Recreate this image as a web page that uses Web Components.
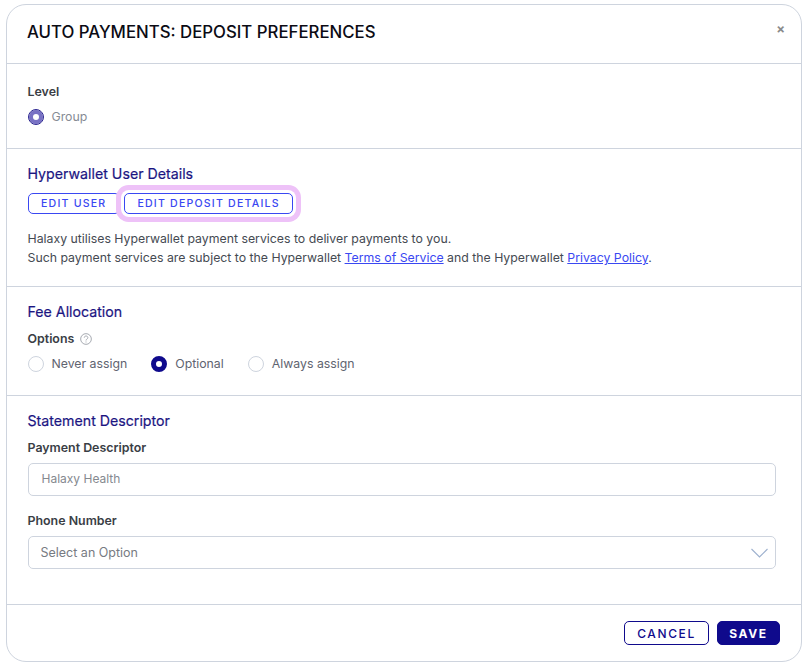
<!DOCTYPE html>
<html lang="en">
<head>
<meta charset="utf-8">
<title>Auto Payments</title>
<style>
  html, body { margin: 0; background: #fff; }
  body { font-family: Inter, "Noto Sans", sans-serif; padding: 4px 3px 3px 6px; }
</style>
</head>
<body>
<modal-dialog heading="AUTO PAYMENTS: DEPOSIT PREFERENCES">
  <form-section style="height:85px;padding-top:20px">
    <field-label>Level</field-label>
    <radio-row>
      <radio-option label="Group" state="locked"></radio-option>
    </radio-row>
  </form-section>
  <form-section style="height:138px;padding-top:16px">
    <section-title>Hyperwallet User Details</section-title>
    <div style="display:flex;gap:4px;margin-top:10px">
      <pill-button>EDIT USER</pill-button>
      <pill-button focused>EDIT DEPOSIT DETAILS</pill-button>
    </div>
    <body-copy>
      Halaxy utilises Hyperwallet payment services to deliver payments to you.<br>
      Such payment services are subject to the Hyperwallet <a href="#">Terms of Service</a> and the Hyperwallet <a href="#">Privacy Policy</a>.
    </body-copy>
  </form-section>
  <form-section style="height:109px;padding-top:16px">
    <section-title>Fee Allocation</section-title>
    <field-label style="margin-top:10px">Options <help-icon></help-icon></field-label>
    <radio-row>
      <radio-option label="Never assign"></radio-option>
      <radio-option label="Optional" state="checked"></radio-option>
      <radio-option label="Always assign"></radio-option>
    </radio-row>
  </form-section>
  <form-section style="height:208px;padding-top:16px" last>
    <section-title>Statement Descriptor</section-title>
    <field-label style="margin-top:10px">Payment Descriptor</field-label>
    <text-field value="Halaxy Health"></text-field>
    <field-label style="margin-top:17px">Phone Number</field-label>
    <select-field placeholder="Select an Option"></select-field>
  </form-section>
  <action-button slot="footer" kind="outline">CANCEL</action-button>
  <action-button slot="footer" kind="solid">SAVE</action-button>
</modal-dialog>

<script>
// small helper, every element just sets its shadow html once
function shadowOf(el, html) {
  const shadow = el.attachShadow({ mode: 'open' });
  shadow.innerHTML = html;
  return shadow;
}

class ModalDialog extends HTMLElement {
  constructor() {
    super();
    shadowOf(this, `
      <style>
        :host {
          display: flex;
          flex-direction: column;
          box-sizing: border-box;
          width: 796px;
          height: 658px;
          background: #fff;
          border: 1.5px solid #ced4de;
          border-radius: 20px;
          overflow: hidden;
        }
        header {
          flex: none;
          box-sizing: border-box;
          height: 58px;
          padding: 17px 16px 0 20px;
          display: flex;
          justify-content: space-between;
          font-size: 16.8px;
          line-height: 20px;
          font-weight: 500;
          color: #0b0b14;
        }
        .close { color: #8b8b8b; font-size: 13px; font-weight: 700; line-height: 13px; margin-top: 1px; }
        main { flex: 1; min-height: 0; }
        footer {
          flex: none;
          display: flex;
          justify-content: flex-end;
          gap: 8px;
          padding: 16px 21px 0 0;
          border-top: 1px solid #ced4de;
          height: 57px;
          box-sizing: border-box;
        }
      </style>
      <header><span></span><span class="close">×</span></header>
      <main><slot></slot></main>
      <footer><slot name="footer"></slot></footer>
    `);
    this.shadowRoot.querySelector('header span').textContent = this.getAttribute('heading');
  }
}

class FormSection extends HTMLElement {
  constructor() {
    super();
    shadowOf(this, `
      <style>
        :host {
          display: block;
          box-sizing: border-box;
          border-top: 1px solid #ced4de;
          padding: 0 25.5px 0 20.5px;
        }
      </style>
      <slot></slot>
    `);
  }
}

class SectionTitle extends HTMLElement {
  constructor() {
    super();
    shadowOf(this, `
      <style>
        :host { display: block; font-size: 14.2px; line-height: 18px; font-weight: 400; color: #1b1582; -webkit-text-stroke: .2px #1b1582; }
      </style>
      <slot></slot>
    `);
  }
}

class FieldLabel extends HTMLElement {
  constructor() {
    super();
    shadowOf(this, `
      <style>
        :host { display: flex; align-items: center; gap: 6px; font-size: 12.4px; line-height: 16px; font-weight: 600; color: #3a3e45; }
      </style>
      <slot></slot>
    `);
  }
}

class HelpIcon extends HTMLElement {
  constructor() {
    super();
    shadowOf(this, `
      <style>
        :host { display: inline-flex; }
        svg { display: block; }
      </style>
      <svg width="12" height="12" viewBox="0 0 11 11" fill="none" stroke="#9a9fa6" stroke-width=".8">
        <circle cx="5.5" cy="5.5" r="4.9"/>
        <path d="M3.9 4.3c0-2.1 3.3-2 3.3 0 0 1.200-1.700 1.300-1.700 2.600"/>
        <path d="M5.500 7.800v.9"/>
      </svg>
    `);
  }
}

class RadioRow extends HTMLElement {
  constructor() {
    super();
    shadowOf(this, `
      <style>
        :host { display: flex; gap: 24px; margin-top: 9px; }
      </style>
      <slot></slot>
    `);
  }
}

class RadioOption extends HTMLElement {
  constructor() {
    super();
    shadowOf(this, `
      <style>
        :host { display: inline-flex; align-items: center; gap: 8px; font-size: 12.3px; line-height: 16px; color: #5f6470; }
        i { box-sizing: border-box; width: 16px; height: 16px; border-radius: 50%; border: 1px solid #ced4de; background: #fff; flex: none; }
        :host([state=checked]) i { border: 5px solid #0f0a8c; }
        :host([state=locked]) i { border: 1px solid #2a2490; background: #fff; box-shadow: inset 0 0 0 4px #7871c4; }
        :host([state=locked]) { color: #868b94; }
      </style>
      <i></i><span></span>
    `);
    this.shadowRoot.querySelector('span').textContent = this.getAttribute('label');
  }
}

class PillButton extends HTMLElement {
  constructor() {
    super();
    shadowOf(this, `
      <style>
        :host { display: inline-flex; position: relative; }
        button {
          all: unset;
          box-sizing: border-box;
          height: 21px;
          padding: 0 12.5px;
          display: flex;
          align-items: center;
          font: 500 10.6px Inter, sans-serif;
          letter-spacing: 1.2px;
          color: #3a48f2;
          background: #fff;
          border: 1px solid #3a48f2;
          border-radius: 5px;
        }
        :host([focused]) button { box-shadow: 0 0 0 3px #fff, 0 0 0 8px #eec2f8; }
      </style>
      <button><slot></slot></button>
    `);
  }
}

class BodyCopy extends HTMLElement {
  constructor() {
    super();
    shadowOf(this, `
      <style>
        :host { display: block; margin-top: 15px; font-size: 12.3px; line-height: 19px; color: #454a52; }
        ::slotted(a) { color: #3a48f2; }
      </style>
      <slot></slot>
    `);
  }
}

class TextField extends HTMLElement {
  constructor() {
    super();
    shadowOf(this, `
      <style>
        :host {
          display: flex;
          align-items: center;
          box-sizing: border-box;
          height: 33px;
          margin-top: 7px;
          padding: 0 13px 2px;
          border: 1px solid #ced4de;
          border-radius: 5px;
          font-size: 12px;
          color: #85898f;
        }
      </style>
      <span></span>
    `);
    this.shadowRoot.querySelector('span').textContent = this.getAttribute('value');
  }
}

class SelectField extends HTMLElement {
  constructor() {
    super();
    shadowOf(this, `
      <style>
        :host {
          display: flex;
          align-items: center;
          justify-content: space-between;
          box-sizing: border-box;
          height: 33px;
          margin-top: 7px;
          padding: 0 7px 0 12px;
          border: 1px solid #ced4de;
          border-radius: 5px;
          font-size: 12.5px;
          color: #777b82;
        }
        svg { display: block; }
      </style>
      <span></span>
      <svg width="17" height="10" viewBox="0 0 17 10" fill="none" stroke="#9db0ce" stroke-width="1.100">
        <path d="M.5 1 8.500 9 16.500 1"/>
      </svg>
    `);
    this.shadowRoot.querySelector('span').textContent = this.getAttribute('placeholder');
  }
}

class ActionButton extends HTMLElement {
  constructor() {
    super();
    shadowOf(this, `
      <style>
        :host {
          display: inline-flex;
          align-items: center;
          justify-content: center;
          box-sizing: border-box;
          height: 24px;
          border-radius: 5px;
          font-size: 12px;
          letter-spacing: 1.6px;
          border: 1px solid #0f0a8c;
        }
        :host([kind=outline]) { width: 85px; color: #0f0a8c; background: #fff; font-weight: 500; }
        :host([kind=solid]) { width: 63px; color: #fff; background: #0f0a8c; font-weight: 700; }
      </style>
      <slot></slot>
    `);
  }
}

customElements.define('modal-dialog', ModalDialog);
customElements.define('form-section', FormSection);
customElements.define('section-title', SectionTitle);
customElements.define('field-label', FieldLabel);
customElements.define('help-icon', HelpIcon);
customElements.define('radio-row', RadioRow);
customElements.define('radio-option', RadioOption);
customElements.define('pill-button', PillButton);
customElements.define('body-copy', BodyCopy);
customElements.define('text-field', TextField);
customElements.define('select-field', SelectField);
customElements.define('action-button', ActionButton);
</script>
</body>
</html>
